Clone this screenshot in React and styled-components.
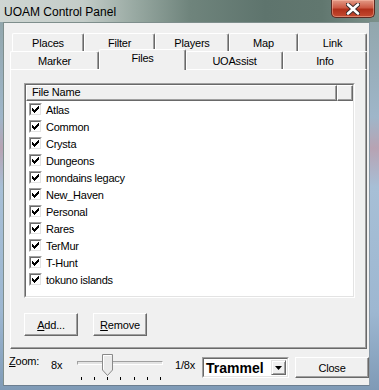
import React from "react";
import styled, { createGlobalStyle } from "styled-components";

const Global = createGlobalStyle`
  html, body { margin: 0; padding: 0; background: #ffffff; }
  body { font-family: "Liberation Sans", Arial, sans-serif; }
  #root { width: 379px; height: 390px; }
`;

const Window = styled.div`
  width: 379px;
  height: 390px;
  display: flex;
  flex-direction: column;
  overflow: hidden;
  background: linear-gradient(180deg, #8fa3a6 0%, #9fb6c9 30%, #b7a3b3 38%, #a7bfd6 48%, #9db7d1 80%, #7f9ab6 100%);
`;

const TitleBar = styled.div`
  height: 22px;
  flex: none;
  display: flex;
  align-items: flex-start;
  background: linear-gradient(90deg, #cfd6d3 0%, #c3ccc8 22%, #97a8a1 36%, #6f847c 50%, #5e746d 70%, #61776f 85%, #7c918b 100%);
`;

const TitleText = styled.div`
  font-family: "Liberation Sans", Arial, sans-serif;
  font-size: 12px;
  color: #000;
  padding: 5px 0 0 4px;
  line-height: 14px;
`;

const CloseBox = styled.div`
  margin-left: auto;
  margin-right: 4px;
  width: 44px;
  height: 18px;
  box-sizing: border-box;
  border: 1px solid #5a2a22;
  border-top: none;
  border-radius: 0 0 5px 5px;
  background: linear-gradient(180deg, #e39a86 0%, #cc5a44 45%, #b0301a 55%, #c44a30 100%);
  display: flex;
  align-items: center;
  justify-content: center;
  box-shadow: inset 0 0 0 1px rgba(255, 200, 180, 0.45);
`;

const FrameBody = styled.div`
  flex: 1;
  display: flex;
  padding: 0 9px 4px 3px;
`;

const Client = styled.div`
  flex: 1;
  background: #f0f0f0;
  border-top: 1px solid #7e8e8c;
  border-left: 1px solid #7e8e8c;
  border-right: 1px solid #8a9aa8;
  border-bottom: 1px solid #6c7e90;
  display: flex;
  flex-direction: column;
  padding: 10px 0 0 6px;
`;

const TabRow = styled.div`
  display: flex;
  height: 18px;
  padding-left: ${(p) => p.$indent || 0}px;
`;

const Tab = styled.div`
  width: ${(p) => p.$w}px;
  height: ${(p) => (p.$active ? 21 : 18)}px;
  margin-top: ${(p) => (p.$active ? -2 : 0)}px;
  position: relative;
  z-index: ${(p) => (p.$active ? 2 : 1)};
  box-sizing: border-box;
  background: #f0f0f0;
  border-top: 1px solid #ffffff;
  border-left: 1px solid #ffffff;
  border-right: 1px solid #696969;
  box-shadow: inset -1px 0 0 #a0a0a0;
  border-radius: 2px 2px 0 0;
  font-size: 11px;
  letter-spacing: -0.2px;
  color: #000;
  text-align: center;
  padding-top: ${(p) => (p.$active ? 2 : 3)}px;
  line-height: 13px;
`;

const Panel = styled.div`
  width: 357px;
  height: 280px;
  box-sizing: border-box;
  border-top: 1px solid #ffffff;
  border-left: 1px solid #ffffff;
  border-right: 1px solid #696969;
  border-bottom: 1px solid #696969;
  box-shadow: inset -1px -1px 0 #a0a0a0;
  padding: 13px 0 0 13px;
  display: flex;
  flex-direction: column;
`;

const ListOuter = styled.div`
  width: 331px;
  height: 215px;
  box-sizing: border-box;
  border-top: 1px solid #a0a0a0;
  border-left: 1px solid #a0a0a0;
  border-right: 1px solid #ffffff;
  border-bottom: 1px solid #ffffff;
  display: flex;
`;

const ListInner = styled.div`
  flex: 1;
  border-top: 1px solid #696969;
  border-left: 1px solid #696969;
  border-right: 1px solid #e3e3e3;
  border-bottom: 1px solid #e3e3e3;
  background: #ffffff;
  display: flex;
  flex-direction: column;
`;

const HeaderRow = styled.div`
  display: flex;
  height: 16px;
  flex: none;
`;

const HeaderCell = styled.div`
  width: ${(p) => (p.$w ? `${p.$w}px` : "auto")};
  flex: ${(p) => (p.$w ? "none" : 1)};
  box-sizing: border-box;
  background: #f0f0f0;
  border-top: 1px solid #ffffff;
  border-left: 1px solid #ffffff;
  border-right: 1px solid #696969;
  border-bottom: 1px solid #696969;
  box-shadow: inset -1px -1px 0 #a0a0a0;
  font-size: 11px;
  letter-spacing: -0.2px;
  line-height: 13px;
  padding-left: 5px;
  color: #000;
`;

const Row = styled.div`
  display: flex;
  align-items: center;
  height: 17px;
  padding-left: 3px;
  gap: 4px;
  font-size: 11px;
  letter-spacing: -0.25px;
  color: #000;
`;

const CheckOuter = styled.div`
  width: 13px;
  height: 13px;
  box-sizing: border-box;
  border-top: 1px solid #a0a0a0;
  border-left: 1px solid #a0a0a0;
  border-right: 1px solid #ffffff;
  border-bottom: 1px solid #ffffff;
  flex: none;
`;

const CheckInner = styled.div`
  width: 100%;
  height: 100%;
  box-sizing: border-box;
  border-top: 1px solid #696969;
  border-left: 1px solid #696969;
  border-right: 1px solid #e3e3e3;
  border-bottom: 1px solid #e3e3e3;
  background: #ffffff;
  display: flex;
  align-items: center;
  justify-content: center;
`;

const ButtonRow = styled.div`
  display: flex;
  gap: 15px;
  margin-top: 15px;
`;

const Button = styled.div`
  width: ${(p) => p.$w}px;
  height: ${(p) => p.$h || 23}px;
  box-sizing: border-box;
  background: #f0f0f0;
  border-top: 1px solid #ffffff;
  border-left: 1px solid #ffffff;
  border-right: 1px solid #696969;
  border-bottom: 1px solid #696969;
  box-shadow: inset -1px -1px 0 #a0a0a0;
  display: flex;
  align-items: center;
  justify-content: center;
  font-size: 11px;
  letter-spacing: -0.2px;
  color: #000;
  flex: none;
  margin-top: ${(p) => p.$mt || 0}px;
  margin-left: ${(p) => p.$ml || 0}px;
`;

const U = styled.span`
  text-decoration: underline;
`;

const BottomBar = styled.div`
  display: flex;
  align-items: flex-start;
  height: 36px;
  margin-left: -1px;
`;

const Label = styled.div`
  width: ${(p) => p.$w}px;
  flex: none;
  font-size: 11px;
  letter-spacing: -0.2px;
  line-height: 13px;
  color: #000;
  margin-top: ${(p) => p.$mt}px;
`;

const Slider = styled.div`
  width: 86px;
  height: 36px;
  position: relative;
  flex: none;
  margin-right: 12px;
`;

const Track = styled.div`
  margin-top: 12px;
  height: 4px;
  box-sizing: border-box;
  border-top: 1px solid #a0a0a0;
  border-left: 1px solid #a0a0a0;
  border-bottom: 1px solid #ffffff;
  border-right: 1px solid #ffffff;
  background: #e3e3e3;
`;

const Thumb = styled.svg`
  position: absolute;
  left: 25px;
  top: 5px;
`;

const Ticks = styled.div`
  display: flex;
  justify-content: space-between;
  padding: 0 2px 0 4px;
  margin-top: 12px;
`;

const Tick = styled.div`
  width: 1px;
  height: 3px;
  background: #000;
`;

const Combo = styled.div`
  width: 87px;
  height: 21px;
  margin-top: 8px;
  box-sizing: border-box;
  border-top: 1px solid #a0a0a0;
  border-left: 1px solid #a0a0a0;
  border-right: 1px solid #ffffff;
  border-bottom: 1px solid #ffffff;
  flex: none;
  display: flex;
`;

const ComboInner = styled.div`
  flex: 1;
  display: flex;
  align-items: center;
  background: #ffffff;
  border-top: 1px solid #696969;
  border-left: 1px solid #696969;
  border-right: 1px solid #e3e3e3;
  border-bottom: 1px solid #e3e3e3;
  padding: 0 1px 0 2px;
`;

const ComboText = styled.div`
  flex: 1;
  font-size: 14px;
  font-weight: bold;
  color: #000;
  line-height: 16px;
  padding-top: 1px;
`;

const DropButton = styled.div`
  width: 15px;
  height: 15px;
  box-sizing: border-box;
  background: #f0f0f0;
  border-top: 1px solid #e3e3e3;
  border-left: 1px solid #e3e3e3;
  border-right: 1px solid #696969;
  border-bottom: 1px solid #696969;
  box-shadow: inset 1px 1px 0 #ffffff, inset -1px -1px 0 #a0a0a0;
  display: flex;
  align-items: center;
  justify-content: center;
`;

const files = [
  "Atlas",
  "Common",
  "Crysta",
  "Dungeons",
  "mondains legacy",
  "New_Haven",
  "Personal",
  "Rares",
  "TerMur",
  "T-Hunt",
  "tokuno islands",
];

function Check() {
  return (
    <CheckOuter>
      <CheckInner>
        <svg width="7" height="7" viewBox="0 0 7 7">
          <path d="M0 2h1v1h1v1h1V3h1V2h1V1h1V0h1v3h-1v1h-1v1h-1v1h-1v1H2V6H1V5H0z" fill="#000" />
        </svg>
      </CheckInner>
    </CheckOuter>
  );
}

export default function App() {
  return (
    <>
      <Global />
      <Window>
        <TitleBar>
          <TitleText>UOAM Control Panel</TitleText>
          <CloseBox>
            <svg width="14" height="12" viewBox="0 0 14 12">
              <path d="M2 1.5 L12 10.5 M12 1.5 L2 10.5" stroke="#3a2a2a" strokeWidth="4.5" strokeLinecap="round" />
              <path d="M2 1.5 L12 10.5 M12 1.5 L2 10.5" stroke="#ffffff" strokeWidth="2.6" strokeLinecap="round" />
            </svg>
          </CloseBox>
        </TitleBar>
        <FrameBody>
          <Client>
            <TabRow $indent={2}>
              <Tab $w={72}>Places</Tab>
              <Tab $w={71}>Filter</Tab>
              <Tab $w={74}>Players</Tab>
              <Tab $w={69}>Map</Tab>
              <Tab $w={69}>Link</Tab>
            </TabRow>
            <TabRow>
              <Tab $w={89}>Marker</Tab>
              <Tab $w={87} $active>Files</Tab>
              <Tab $w={97}>UOAssist</Tab>
              <Tab $w={84}>Info</Tab>
            </TabRow>
            <Panel>
              <ListOuter>
                <ListInner>
                  <HeaderRow>
                    <HeaderCell $w={311}>File Name</HeaderCell>
                    <HeaderCell />
                  </HeaderRow>
                  {files.map((f) => (
                    <Row key={f}>
                      <Check />
                      <span>{f}</span>
                    </Row>
                  ))}
                </ListInner>
              </ListOuter>
              <ButtonRow>
                <Button $w={54}>
                  <span><U>A</U>dd...</span>
                </Button>
                <Button $w={54}>
                  <span><U>R</U>emove</span>
                </Button>
              </ButtonRow>
            </Panel>
            <BottomBar>
              <Label $w={42} $mt={6}>
                <U>Z</U>oom:
              </Label>
              <Label $w={26} $mt={10}>8x</Label>
              <Slider>
                <Track />
                <Thumb width="11" height="22" viewBox="0 0 11 22">
                  <path d="M0.5 0.5 H10.5 V16 L5.5 21.5 L0.5 16 Z" fill="#eaeaea" stroke="#8a8a8a" />
                  <path d="M1.5 15.5 V1.5 H9.5" fill="none" stroke="#ffffff" />
                </Thumb>
                <Ticks>
                  {[0, 1, 2, 3, 4, 5, 6].map((i) => (
                    <Tick key={i} />
                  ))}
                </Ticks>
              </Slider>
              <Label $w={27} $mt={10}>1/8x</Label>
              <Combo>
                <ComboInner>
                  <ComboText>Trammel</ComboText>
                  <DropButton>
                    <svg width="7" height="4" viewBox="0 0 7 4">
                      <path d="M0 0h7L3.5 4z" fill="#000" />
                    </svg>
                  </DropButton>
                </ComboInner>
              </Combo>
              <Button $w={74} $h={21} $mt={8} $ml={6}>Close</Button>
            </BottomBar>
          </Client>
        </FrameBody>
      </Window>
    </>
  );
}
